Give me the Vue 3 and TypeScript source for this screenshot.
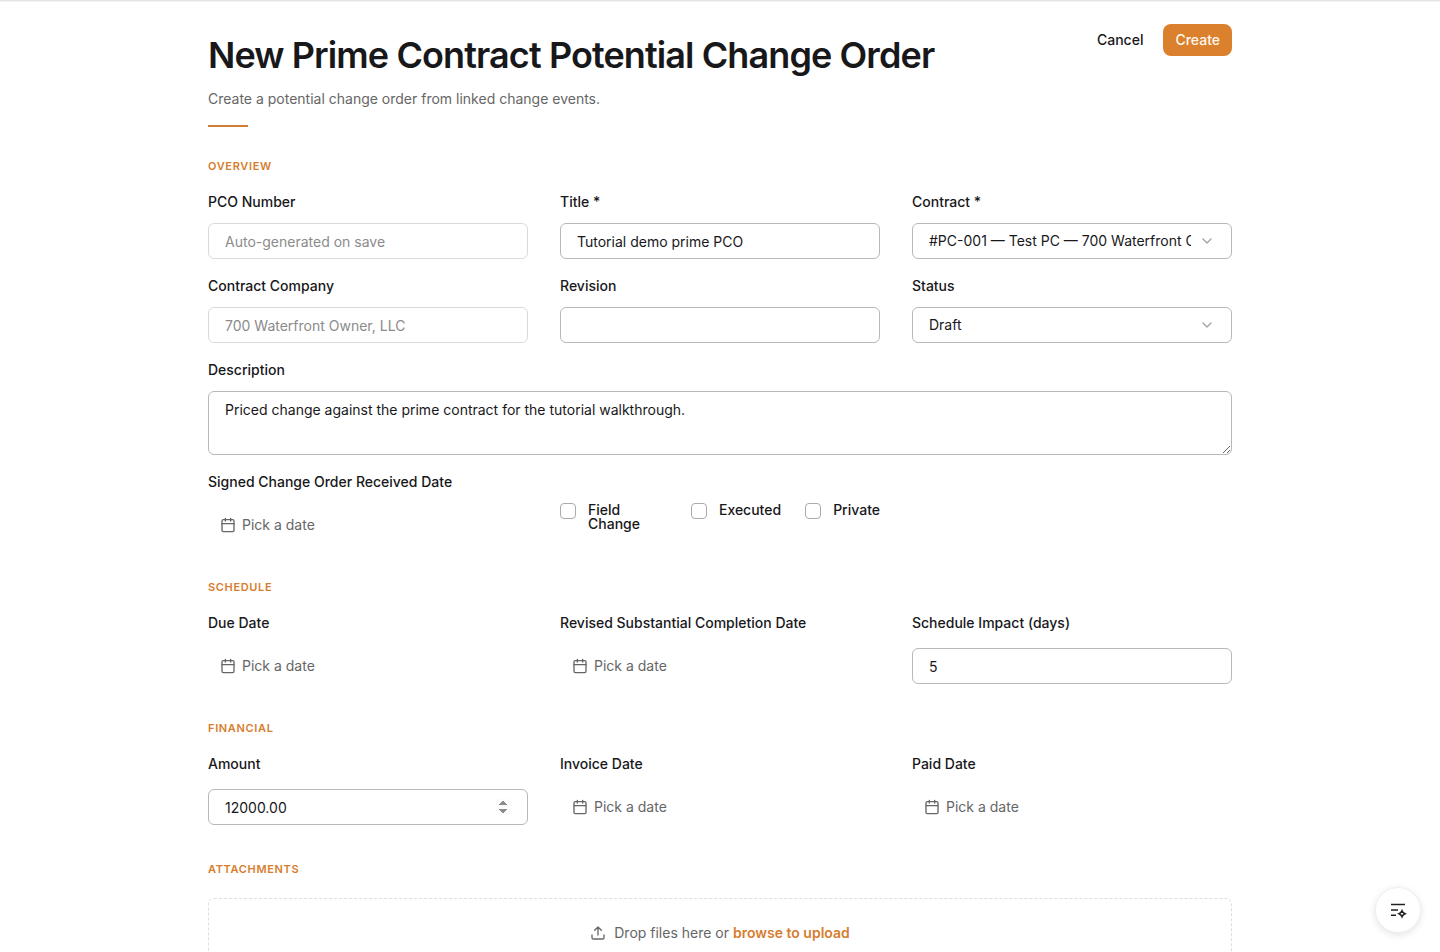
<script setup lang="ts">
import { ref } from 'vue'

const title = ref('Tutorial demo prime PCO')
const revision = ref('')
const contract = ref('#PC-001 — Test PC — 700 Waterfront Owner, LLC')
const status = ref('Draft')
const description = ref('Priced change against the prime contract for the tutorial walkthrough.')
const impact = ref('5')
const amount = ref('12000.00')
const flags = ref([
  { id: 'field-change', label: 'Field Change', checked: false },
  { id: 'executed', label: 'Executed', checked: false },
  { id: 'private', label: 'Private', checked: false },
])
</script>

<template>
  <div class="page">
    <svg class="symbols" aria-hidden="true">
      <symbol id="icon-calendar" viewBox="0 0 24 24">
        <path d="M8 2v4M16 2v4M3 10h18" />
        <rect x="3" y="4" width="18" height="18" rx="2" />
      </symbol>
      <symbol id="icon-chevron" viewBox="0 0 24 24">
        <path d="m6 9 6 6 6-6" />
      </symbol>
    </svg>

    <main class="container">
      <header class="header">
        <div class="heading">
          <h1>New Prime Contract Potential Change Order</h1>
          <p>Create a potential change order from linked change events.</p>
          <span class="accent"></span>
        </div>
        <div class="actions">
          <button type="button" class="btn">Cancel</button>
          <button type="submit" form="pco-form" class="btn primary">Create</button>
        </div>
      </header>

      <form id="pco-form" class="form" @submit.prevent>
        <section>
          <h2>Overview</h2>
          <div class="grid">
            <div class="field">
              <label for="pco-number">PCO Number</label>
              <input id="pco-number" class="control" type="text" placeholder="Auto-generated on save" disabled />
            </div>
            <div class="field">
              <label for="title">Title *</label>
              <input id="title" v-model="title" class="control" type="text" />
            </div>
            <div class="field">
              <label for="contract">Contract *</label>
              <div class="select">
                <select id="contract" v-model="contract" class="control">
                  <option>{{ contract }}</option>
                </select>
                <svg class="icon chevron" aria-hidden="true"><use href="#icon-chevron" /></svg>
              </div>
            </div>
            <div class="field">
              <label for="company">Contract Company</label>
              <input id="company" class="control" type="text" value="700 Waterfront Owner, LLC" disabled />
            </div>
            <div class="field">
              <label for="revision">Revision</label>
              <input id="revision" v-model="revision" class="control" type="text" />
            </div>
            <div class="field">
              <label for="status">Status</label>
              <div class="select">
                <select id="status" v-model="status" class="control">
                  <option>Draft</option>
                </select>
                <svg class="icon chevron" aria-hidden="true"><use href="#icon-chevron" /></svg>
              </div>
            </div>
            <div class="field wide">
              <label for="description">Description</label>
              <textarea id="description" v-model="description" class="control"></textarea>
            </div>
            <div class="field roomy">
              <label for="signed-date">Signed Change Order Received Date</label>
              <button id="signed-date" type="button" class="date">
                <svg class="icon" aria-hidden="true"><use href="#icon-calendar" /></svg>Pick a date
              </button>
            </div>
            <div class="checks">
              <div v-for="flag in flags" :key="flag.id" class="check">
                <input :id="flag.id" v-model="flag.checked" type="checkbox" />
                <label :for="flag.id">{{ flag.label }}</label>
              </div>
            </div>
          </div>
        </section>

        <section>
          <h2>Schedule</h2>
          <div class="grid">
            <div class="field roomy">
              <label for="due-date">Due Date</label>
              <button id="due-date" type="button" class="date">
                <svg class="icon" aria-hidden="true"><use href="#icon-calendar" /></svg>Pick a date
              </button>
            </div>
            <div class="field roomy">
              <label for="completion-date">Revised Substantial Completion Date</label>
              <button id="completion-date" type="button" class="date">
                <svg class="icon" aria-hidden="true"><use href="#icon-calendar" /></svg>Pick a date
              </button>
            </div>
            <div class="field roomy">
              <label for="impact">Schedule Impact (days)</label>
              <input id="impact" v-model="impact" class="control" type="text" inputmode="numeric" />
            </div>
          </div>
        </section>

        <section>
          <h2>Financial</h2>
          <div class="grid">
            <div class="field roomy">
              <label for="amount">Amount</label>
              <input id="amount" v-model="amount" class="control" type="number" step="0.01" />
            </div>
            <div class="field roomy">
              <label for="invoice-date">Invoice Date</label>
              <button id="invoice-date" type="button" class="date">
                <svg class="icon" aria-hidden="true"><use href="#icon-calendar" /></svg>Pick a date
              </button>
            </div>
            <div class="field roomy">
              <label for="paid-date">Paid Date</label>
              <button id="paid-date" type="button" class="date">
                <svg class="icon" aria-hidden="true"><use href="#icon-calendar" /></svg>Pick a date
              </button>
            </div>
          </div>
        </section>

        <section>
          <h2>Attachments</h2>
          <div class="dropzone">
            <svg class="icon" viewBox="0 0 24 24" aria-hidden="true">
              <path d="M12 3v12M17 8l-5-5-5 5M21 15v4a2 2 0 0 1-2 2H5a2 2 0 0 1-2-2v-4" />
            </svg>
            <span>Drop files here or <button type="button" class="browse">browse to upload</button></span>
          </div>
        </section>
      </form>
    </main>

    <button type="button" class="fab" aria-label="Open assistant">
      <svg viewBox="0 0 20 20" aria-hidden="true">
        <path d="M3 4.5h14M3 10h7M3 15.2h5" />
        <path d="M14 10.8q.9 2.1 3 3-2.1.9-3 3-.9-2.1-3-3 2.1-.9 3-3Z" />
      </svg>
    </button>
  </div>
</template>

<style>
body {
  background: #fff;
}
html {
  scrollbar-width: none;
}
</style>

<style scoped>
* {
  box-sizing: border-box;
}
.page {
  min-height: 100vh;
  border-top: 1px solid #e5e5e5;
  box-shadow: inset 0 1px 1px #f3f3f3;
  color: #18181b;
  font: 400 14px/20px Inter, "Liberation Sans", sans-serif;
}
.symbols {
  position: absolute;
  width: 0;
  height: 0;
}
.container {
  max-width: 1072px;
  margin: 0 auto;
  padding: 23px 24px 48px;
}
button,
input,
select,
textarea {
  font: inherit;
  color: inherit;
}
button {
  padding: 0;
  border: 0;
  background: none;
  cursor: pointer;
}
.icon {
  width: 16px;
  height: 16px;
  flex: none;
  fill: none;
  stroke: currentColor;
  stroke-width: 2;
  stroke-linecap: round;
  stroke-linejoin: round;
}
.header {
  display: flex;
  justify-content: space-between;
  align-items: flex-start;
  gap: 24px;
  margin-bottom: 31px;
}
.heading {
  padding-top: 8px;
}
h1 {
  margin: 0;
  font-size: 36px;
  line-height: 46px;
  font-weight: 600;
  letter-spacing: -0.025em;
}
.heading p {
  margin: 11px 0 16px;
  color: #666;
}
.accent {
  display: block;
  width: 40px;
  height: 2px;
  background: #cf7f35;
}
.actions {
  display: flex;
  gap: 8px;
}
.btn {
  height: 32px;
  padding: 0 12px;
  border-radius: 8px;
  font-weight: 500;
}
.primary {
  background: #db802d;
  color: #fff8ee;
}
.form {
  display: flex;
  flex-direction: column;
  gap: 36px;
}
h2 {
  margin: 0 0 21px;
  font-size: 11px;
  line-height: 16px;
  font-weight: 600;
  letter-spacing: 0.06em;
  text-transform: uppercase;
  color: #d67d2e;
}
.grid {
  display: grid;
  grid-template-columns: repeat(3, minmax(0, 1fr));
  gap: 20px 32px;
}
.field {
  display: flex;
  flex-direction: column;
  gap: 14px;
}
.roomy {
  gap: 18px;
}
.wide {
  grid-column: 1 / -1;
}
label {
  font-weight: 500;
  line-height: 14px;
}
.control {
  display: block;
  width: 100%;
  height: 36px;
  margin: 0;
  padding: 0 16px;
  border: 1px solid #b8b8b8;
  border-radius: 6px;
  background: #fff;
  outline: none;
}
input.control {
  padding-top: 1px;
}
.control:disabled {
  border-color: #dadada;
  color: #8b8b8b;
}
.control::placeholder {
  color: #8b8b8b;
}
.control[type="number"]::-webkit-inner-spin-button {
  opacity: 1;
}
textarea.control {
  height: 64px;
  padding: 8px 16px;
  resize: vertical;
}
.select {
  position: relative;
}
select.control {
  appearance: none;
  padding-right: 40px;
}
.chevron {
  position: absolute;
  top: 10px;
  right: 17px;
  color: #a3a3a3;
  pointer-events: none;
}
.date {
  display: flex;
  align-items: center;
  align-self: flex-start;
  gap: 6px;
  height: 36px;
  padding: 0 12px;
  color: #666;
}
.checks {
  display: flex;
  align-items: flex-start;
  gap: 24px;
  padding-top: 28px;
}
.check {
  display: flex;
  align-items: flex-start;
  gap: 12px;
}
.check input {
  appearance: none;
  flex: none;
  width: 16px;
  height: 16px;
  margin: 0;
  border: 1px solid #aaa;
  border-radius: 4px;
  background: #fff;
}
.check input:checked {
  border-color: #db802d;
  background: #db802d;
}
.dropzone {
  display: flex;
  justify-content: center;
  align-items: center;
  gap: 8px;
  padding: 24px;
  border: 1px dashed #dedede;
  border-radius: 6px;
  color: #666;
}
.browse {
  font-weight: 600;
  color: #d67d2e;
}
.fab {
  position: fixed;
  right: 20px;
  bottom: 20px;
  display: flex;
  align-items: center;
  justify-content: center;
  width: 44px;
  height: 44px;
  border-radius: 50%;
  background: #fff;
  box-shadow: 0 0 0 1px #f0f0f0, 0 2px 8px rgba(0, 0, 0, 0.14);
}
.fab svg {
  width: 20px;
  height: 20px;
  fill: none;
  stroke: #222;
  stroke-width: 1.6;
}
</style>
